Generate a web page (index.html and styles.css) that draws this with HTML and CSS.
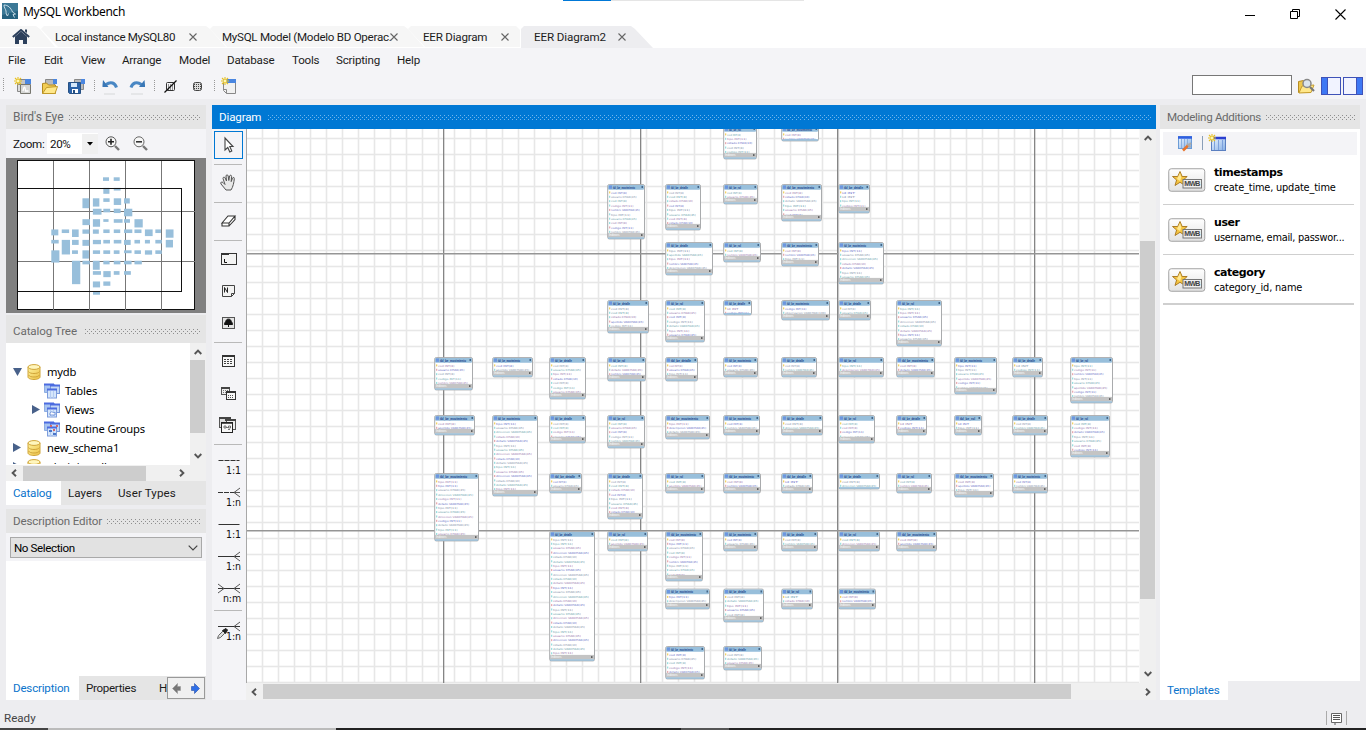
FILE: index.html
```html
<!DOCTYPE html>
<html lang="en">
<head>
<meta charset="utf-8">
<title>MySQL Workbench</title>
<link rel="stylesheet" href="styles.css">
</head>
<body>
<svg class="defs" width="0" height="0">
  <defs>
    <linearGradient id="gold" x1="0" y1="0" x2="1" y2="1"><stop offset="0" stop-color="#fff3a0"/><stop offset="1" stop-color="#ecc044"/></linearGradient>
    <linearGradient id="blueg" x1="0" y1="0" x2="1" y2="1"><stop offset="0" stop-color="#eef6ff"/><stop offset="1" stop-color="#86b0e6"/></linearGradient>
    <linearGradient id="greyg" x1="0" y1="0" x2="0" y2="1"><stop offset="0" stop-color="#ffffff"/><stop offset="1" stop-color="#e2e2e2"/></linearGradient>
    <symbol id="spark" viewBox="0 0 8 8"><path d="M4 0v8M0 4h8M1 1l6 6M7 1l-6 6" stroke="#e8c020" stroke-width="1.1"/><rect x="2.7" y="2.7" width="2.6" height="2.6" fill="#fff8b0"/></symbol>
    <symbol id="db" viewBox="0 0 14 16"><path d="M1 3v10c0 1.400 2.700 2.500 6 2.500s6-1.100 6-2.500V3z" fill="url(#gold)" stroke="#d0a53a"/><ellipse cx="7" cy="3" rx="6" ry="2.400" fill="#fff6bd" stroke="#d0a53a"/><path d="M1.500 7.500c1 1.500 3 2 5.500 2s4.500-.5 5.500-2M1.500 11c1 1.500 3 2 5.500 2s4.500-.5 5.500-2" fill="none" stroke="#d0a53a"/></symbol>
    <symbol id="tables" viewBox="0 0 17 16"><path d="M.5 1.500h10v8H.5z" fill="#a8c4f0" stroke="#8eaee2"/><path d="M0 1.500h10" stroke="#4b6be0" stroke-width="2"/><rect x="6.500" y="2.500" width="9" height="8" fill="#c4d8f6" stroke="#7898da"/><path d="M6 2.500h10" stroke="#4b6be0" stroke-width="2"/><rect x="3.500" y="6.500" width="9" height="8.500" fill="#d5e6fb" stroke="#7c9cdc"/><path d="M3 6.500h10" stroke="#4b6be0" stroke-width="2"/><path d="M6.500 8v7M9.500 8v7" stroke="#b4ccf2"/></symbol>
    <symbol id="mwb" viewBox="0 0 38 25"><rect x=".75" y=".75" width="36" height="22.500" rx="2.500" fill="url(#greyg)" stroke="#a2a2a2"/><path d="M12 3.500l2.200 5h5l-3.900 3.500 1.900 5.500-5.200-3.200L7 17.500 8.600 12 4.500 8.500h5.200z" fill="#f4c542" stroke="#a5731a" stroke-width=".9"/><path d="M12 5l1.300 4.500L12 13l-3-2z" fill="#ffe996"/><rect x="15" y="11.500" width="18.500" height="8.500" fill="#eee" stroke="#777"/><text x="16.300" y="18.400" class="mwb-text" textLength="16">MWB</text></symbol>
    <symbol id="close" viewBox="0 0 8 8"><path d="M.5.5l7 7M7.500.5l-7 7" stroke="#666" stroke-width="1.100"/></symbol>
    <symbol id="chev" viewBox="0 0 8 6"><path d="M.7 5L4 1.600 7.300 5" fill="none" stroke="#555" stroke-width="1.900"/></symbol>
  </defs>
</svg>
<div class="app">
  <div class="progress"></div>
  <header class="titlebar">
    <svg width="16" height="16" viewBox="0 0 16 16"><rect width="16" height="16" fill="#25617f"/><path d="M0 0h16v8L0 12z" fill="#3b7896"/><path d="M2 2c4 0 7 3 8.500 7l3 2-2.500.5 1.500 3M2 2c0 3 1.500 3.500 2 6 .2 2 0 4 1.500 5l1-2.500" fill="none" stroke="#d4e4ed" stroke-width=".9"/></svg>
    <span class="title">MySQL Workbench</span>
    <div class="window-buttons">
      <svg width="11" height="11"><path d="M0 6.500h10" stroke="#000"/></svg>
      <svg width="11" height="11"><path d="M.5 2.500h7v7h-7zM2.500 2V.5h7v7H8" fill="none" stroke="#000"/></svg>
      <svg width="11" height="11"><path d="M.5.5l10 10M10.500.5l-10 10" stroke="#000" stroke-width="1.100"/></svg>
    </div>
  </header>
  <nav class="tabs">
    <div class="tab home"><svg width="18" height="15" viewBox="0 0 18 15"><path d="M3 7.500L9 2.500l6 5V15h-4v-4H7v4H3z" fill="#2c405c"/><path d="M.8 8L9 1l8.200 7" fill="none" stroke="#2c405c" stroke-width="2"/><path d="M13 0.500h2V4l-2-1.500z" fill="#2c405c"/></svg></div>
    <div class="tab t1"><span>Local instance MySQL80</span><svg width="8" height="8"><use href="#close"/></svg></div>
    <div class="tab t2"><span>MySQL Model (Modelo BD Operac.</span><svg width="8" height="8"><use href="#close"/></svg></div>
    <div class="tab t3"><span>EER Diagram</span><svg width="8" height="8"><use href="#close"/></svg></div>
    <div class="tab active"><span>EER Diagram2</span><svg width="8" height="8"><use href="#close"/></svg></div>
  </nav>
  <nav class="menu">
    <span class="m1">File</span><span class="m2">Edit</span><span class="m3">View</span><span class="m4">Arrange</span><span class="m5">Model</span><span class="m6">Database</span><span class="m7">Tools</span><span class="m8">Scripting</span><span class="m9">Help</span>
  </nav>
  <div class="toolbar">
    <svg width="240" height="27" viewBox="0 72 240 27">
      <g stroke="#999" stroke-dasharray="1 1"><path d="M3.500 78v13M94.500 80v12M154.500 80v12M214.500 80v12"/></g>
      <path d="M17.500 79.500h10v9h-10z" fill="#c4c4c4" stroke="#858585"/><path d="M25 79h6v5h-6z" fill="#4a86e0"/><path d="M17.500 84.500h3v7h-3z" fill="#ddd" stroke="#888"/><path d="M20.500 84.500h10v9h-10z" fill="#d6d6d4" stroke="#77776f"/><path d="M23 91c1-5 2-5 2.500 0h3" fill="none" stroke="#fff" stroke-width="1.300"/><use href="#spark" x="14" y="77" width="8" height="8"/>
      <path d="M45.500 79.500h9v9h-9z" fill="#bbb" stroke="#888"/><path d="M53 79h4v5h-4z" fill="#4a86e0"/><path d="M42.500 93.500v-10l4-.5 2 2h7v8.500z" fill="#f2cd54" stroke="#b38a20"/><path d="M42.500 93.500l4-6 11-1-2.500 7z" fill="#ffe88b" stroke="#c29a2a"/>
      <path d="M74.500 79.500h9v10h-9z" fill="#bbb" stroke="#888"/><path d="M81 79h4v5h-4z" fill="#4a86e0"/><path d="M68.500 82.500h12v11h-11l-1-1z" fill="#2c63a8" stroke="#275184"/><path d="M71 83h6v4h-6z" fill="#d6e9fb"/><path d="M72 89h6v4h-6z" fill="#fff"/><path d="M73 90h2v3h-2z" fill="#275184"/>
      <g fill="none" stroke="#4987c4" stroke-width="3"><path d="M106 84.500c5-3.500 9-1.500 10.500 3"/><path d="M141.500 84.500c-5-3.500-9-1.500-10.500 3"/></g><path d="M102.500 85l.5-5 5.500 7h-6zM145 85l-.5-5-5.500 7h6z" fill="#3977b6"/><path d="M104 94h11M131 94h12" stroke="#e0e1e4" stroke-width="1.500"/>
      <g fill="none" stroke="#333"><rect x="166.500" y="82.500" width="8" height="8" rx="1"/><path d="M168 85h6M168 87h6M168 89h6" stroke-dasharray="1 1"/><path d="M164.500 92.500l12-12" stroke="#111" stroke-width="1.200"/><rect x="193.500" y="82.500" width="8" height="8" rx="2" stroke="#444" fill="#ddd"/><path d="M194 84.500h8M194 86.500h8M194 88.500h8" stroke="#444" stroke-dasharray="1 1"/></g>
      <path d="M223.500 80.500h12v13h-9l-3-3z" fill="#f1f1f1" stroke="#888"/><path d="M223 79h13v4h-13z" fill="#4a86e0"/><path d="M223.500 89.500h3v4" fill="none" stroke="#888"/><use href="#spark" x="221" y="77" width="8" height="8"/>
    </svg>
    <div class="search"></div>
    <svg class="right-icons" width="68" height="22" viewBox="1296 75 68 22"><path d="M1298.500 92.500v-11l5-1 1 2h6v10z" fill="#eec64b" stroke="#b68c21"/><path d="M1299 93l3-7 12-1-3 7.500z" fill="#ffe78a" stroke="#c69d2e"/><circle cx="1307" cy="83.500" r="4" fill="#dce5ec" stroke="#888" stroke-width="1.500"/><path d="M1310 87l4 4" stroke="#777" stroke-width="2.200"/><g fill="#f1f3ff" stroke="#3f52b8"><rect x="1321.500" y="77.500" width="19" height="17"/><rect x="1343.500" y="77.500" width="19" height="17"/></g><path d="M1322 78h5v16h-5zM1357 78h5v16h-5z" fill="#3e78f4"/><path d="M1327.500 78v16M1356.500 78v16" stroke="#3f52b8"/></svg>
  </div>

  <main class="body">
    <aside class="left">
      <div class="head"><span class="h1">Bird's Eye</span><i class="dots"></i></div>
      <div class="zoom-row"><span>Zoom:</span><div class="zoom-value"><b>20%</b><i><svg width="6" height="4"><path d="M0 0h6L3 3.500z"/></svg></i></div>
        <svg class="mag" width="15" height="15" viewBox="0 0 15 15"><circle cx="6" cy="5.800" r="5" fill="#f7f7f7" stroke="#555"/><path d="M3 5.800h6M6 2.800v6" stroke="#222" stroke-width="1.600"/><path d="M10 10l4 4" stroke="#777" stroke-width="2.400"/></svg>
        <svg class="mag" width="15" height="15" viewBox="0 0 15 15"><circle cx="6" cy="5.800" r="5" fill="#f7f7f7" stroke="#666"/><path d="M3 5.800h6" stroke="#333" stroke-width="1.600"/><path d="M10 10l4 4" stroke="#777" stroke-width="2.400"/></svg>
      </div>
      <svg id="minimap" class="minimap" width="200" height="155" viewBox="6 158 200 155"></svg>
      <div class="head catalog"><span class="h2">Catalog Tree</span><i class="dots"></i></div>
      <div class="tree">
        <div class="tree-view">
          <div class="row"><svg width="9" height="8"><path d="M0 0h9L4.500 8z" fill="#48618a"/></svg><svg class="ic" width="14" height="16"><use href="#db"/></svg><span>mydb</span></div>
          <div class="row sub"><i></i><svg class="ic" width="17" height="16"><use href="#tables"/></svg><span>Tables</span></div>
          <div class="row sub"><svg width="8" height="9"><path d="M0 0v9l8-4.500z" fill="#48618a"/></svg><svg class="ic" width="17" height="16"><use href="#tables"/><path d="M6 11c2-3 3 1 5-1v3H6z" fill="#fff" stroke="#557fd0" stroke-width=".8"/></svg><span>Views</span></div>
          <div class="row sub"><i></i><svg class="ic" width="17" height="16"><use href="#tables"/><path d="M5 9h3v2H5zM9 12h3v2H9z" fill="#4a76c9"/><path d="M9 8h2v2H9zM6 4h2v2H6zM12 4h2v2h-2z" fill="#d06a6a"/></svg><span>Routine Groups</span></div>
          <div class="row"><svg width="8" height="9"><path d="M0 0v9l8-4.500z" fill="#48618a"/></svg><svg class="ic" width="14" height="16"><use href="#db"/></svg><span>new_schema1</span></div>
          <div class="row"><svg width="8" height="9"><path d="M0 0v9l8-4.500z" fill="#48618a"/></svg><svg class="ic" width="14" height="16"><use href="#db"/></svg><span>phpinjavadb</span></div>
        </div>
        <div class="vbar"><svg width="8" height="6"><use href="#chev"/></svg><i></i><svg class="down" width="8" height="6"><use href="#chev"/></svg></div>
      </div>
      <div class="hbar-small"><svg class="lt" width="8" height="6"><use href="#chev"/></svg><i></i><svg class="rt" width="8" height="6"><use href="#chev"/></svg></div>
      <div class="side-tabs"><b class="on s1">Catalog</b><b class="s2">Layers</b><b class="s3">User Types</b></div>
      <div class="head desc"><span class="h3">Description Editor</span><i class="dots"></i></div>
      <div class="select-row"><div class="select"><span>No Selection</span><svg width="10" height="6"><path d="M.7.700L5 5 9.300.700" fill="none" stroke="#444" stroke-width="1.200"/></svg></div></div>
      <div class="blank"></div>
      <div class="side-tabs bottom"><b class="on s4">Description</b><b class="s5">Properties</b><b class="s6">H</b><div class="arrows"><svg width="37" height="21"><path d="M4.500 10.500l5-5v3h3v4h-3v3z" fill="#777" stroke="#999" stroke-width=".6"/><path d="M31.500 10.500l-5-5v3h-3v4h3v3z" fill="#2f6fe8" stroke="#274fa6" stroke-width=".6"/></svg></div></div>
    </aside>

    <section class="center">
      <div class="head blue"><span class="h4">Diagram</span><i class="dots"></i></div>
      <div class="workspace">
        <div class="tools">
          <svg class="tool picked" viewBox="0 0 33 32"><path d="M13 9v12l2.800-2.500 2 4.500 2-1-2-4.500h3.200z" fill="#fff" stroke="#444" stroke-width="1.100"/></svg>
          <i class="sep"></i>
          <svg class="tool" viewBox="0 0 33 32"><path d="M14 23l-5-6c-1-2 1-2.500 2-1.500l2 2-2-6c0-2 1.800-1.500 2.200-.5l1.300 3-.5-5c0-1.500 2-1.500 2.200 0l.6 4.500.8-4.500c.4-1.300 2.200-1 2 .6l-.4 5 1.300-3.500c.7-1.300 2-.7 1.800.6-.3 3.500-1.200 8.300-3.300 11.300z" fill="#e8e8e8" stroke="#555"/></svg>
          <i class="sep"></i>
          <svg class="tool" viewBox="0 0 33 32"><path d="M10 18l6-7h7l-6 7zM10 18v3h7v-3M17 21l6-6.500V11" fill="#fff" stroke="#333" stroke-width="1.100"/></svg>
          <i class="sep"></i>
          <svg class="tool" viewBox="0 0 33 32"><rect x="9.500" y="10.500" width="15" height="11" fill="#f3f3f3" stroke="#333"/><path d="M9 11h8" stroke="#333" stroke-width="2"/><path d="M12.500 16v3.500h2.500" fill="none" stroke="#111"/></svg>
          <svg class="tool" viewBox="0 0 33 32"><path d="M10.500 10.500h12v8l-3 3h-9z" fill="#f3f3f3" stroke="#444"/><path d="M19.500 21.500v-3h3" fill="none" stroke="#444"/><path d="M12.500 17.500v-5l3 5v-5" fill="none" stroke="#222"/></svg>
          <svg class="tool" viewBox="0 0 33 32"><rect x="10.500" y="10.500" width="12" height="11" fill="#e4e4e4" stroke="#555"/><path d="M16.500 18v2M12.500 17.500c0-2 1-2.500 1.500-3.500 0-2.500 5-2.500 5 0 .5 1 1.500 1.500 1.500 3.500z" fill="#111" stroke="#111"/></svg>
          <i class="sep"></i>
          <svg class="tool" viewBox="0 0 33 32"><rect x="10.500" y="10.500" width="12" height="11" fill="#f7f7f7" stroke="#333"/><path d="M10 11h13" stroke="#333" stroke-width="2"/><path d="M12 14.500h9M12 16.500h9M12 18.500h9" stroke="#444" stroke-dasharray="2 1"/></svg>
          <svg class="tool" viewBox="0 0 33 32"><rect x="9.500" y="10.500" width="8" height="7" fill="#eee" stroke="#555"/><path d="M9 11h9" stroke="#444" stroke-width="2"/><path d="M11 13.500h5M11 15.500h3" stroke="#777" stroke-dasharray="1 1"/><rect x="14.500" y="14.500" width="9" height="8" fill="#f7f7f7" stroke="#333"/><path d="M14 15h10" stroke="#333" stroke-width="2"/><path d="M16 18.500h6M16 20.500h6" stroke="#555" stroke-dasharray="1 1"/></svg>
          <svg class="tool" viewBox="0 0 33 32"><rect x="7.500" y="8.500" width="11" height="10" fill="#ddd" stroke="#555"/><path d="M7 9h12" stroke="#444" stroke-width="2"/><rect x="14.500" y="10.500" width="9" height="10" fill="#eee" stroke="#555"/><path d="M13 11h11" stroke="#444" stroke-width="2"/><rect x="9.500" y="13.500" width="11" height="10" fill="#f7f7f7" stroke="#222"/><path d="M9 14h12" stroke="#222" stroke-width="1.500"/><path d="M12 17h2v2h-2zM16.500 17h2v2h-2zM16 20.500h2M14 18.500h2" fill="none" stroke="#555" stroke-width=".8"/></svg>
          <i class="sep"></i>
          <svg class="tool" viewBox="0 0 33 32"><path d="M6.500 13.500h21" stroke="#333" stroke-dasharray="5 1"/><text x="29" y="27">1:1</text></svg>
          <svg class="tool" viewBox="0 0 33 32"><path d="M6 13.500h16" stroke="#333" stroke-dasharray="5 1"/><path d="M22 13.500h6M28 9l-6 4.500 6 4.500" fill="none" stroke="#555"/><text x="29" y="27">1:n</text></svg>
          <svg class="tool" viewBox="0 0 33 32"><path d="M6.500 13.500h21" stroke="#333"/><text x="29" y="27">1:1</text></svg>
          <svg class="tool" viewBox="0 0 33 32"><path d="M6 13.500h22" stroke="#333"/><path d="M28 9l-6 4.500 6 4.500" fill="none" stroke="#555"/><text x="29" y="27">1:n</text></svg>
          <svg class="tool" viewBox="0 0 33 32"><path d="M6 13.500h22" stroke="#333"/><path d="M28 9l-6 4.500 6 4.500M6 9l6 4.500L6 18" fill="none" stroke="#555"/><text x="29" y="27">n:m</text></svg>
          <i class="sep"></i>
          <svg class="tool" viewBox="0 0 33 32"><path d="M6 13.500h22" stroke="#333"/><path d="M28 9l-6 4.500 6 4.500" fill="none" stroke="#555"/><path d="M5.500 25.500l1-3 4.500-4.500 2 2-4.500 4.500z" fill="#ddd" stroke="#666"/><path d="M10.500 17.500l3.500-2 1.500 1.500-2 3.500z" fill="#222" stroke="#222"/><text x="29" y="27">1:n</text></svg>
        </div>
        <div class="canvas-wrap">
          <div class="canvas-row">
            <svg id="diagram" class="diagram" width="894" height="554" viewBox="246 129 894 554"></svg>
            <div class="vbar big"><svg width="8" height="6"><use href="#chev"/></svg><i></i><svg class="down" width="8" height="6"><use href="#chev"/></svg></div>
          </div>
          <div class="hbar"><svg class="lt" width="8" height="6"><use href="#chev"/></svg><i></i><svg class="rt" width="8" height="6"><use href="#chev"/></svg></div>
        </div>
      </div>
    </section>

    <aside class="right">
      <div class="head"><span class="h5">Modeling Additions</span><i class="dots"></i></div>
      <div class="right-body">
        <div class="mini-tools"><svg width="80" height="23" viewBox="1163 132 80 23"><rect x="1178.500" y="136.500" width="13" height="12" fill="url(#blueg)" stroke="#6c9cd6"/><path d="M1178 137.500h14" stroke="#2f5fe0" stroke-width="2.500"/><path d="M1181.500 139v9M1184.500 139v9M1187.500 139v9" stroke="#88afe0"/><path d="M1183 150.500l5-5" stroke="#e8742c" stroke-width="2.600"/><path d="M1187 143.500l3.500 3.500M1188 146l3-3" stroke="#aaa" stroke-width="1.800"/><path d="M1202.500 136v14" stroke="#8a9fb8"/><rect x="1211.500" y="137.500" width="14" height="13" fill="url(#blueg)" stroke="#5a7fc0"/><path d="M1211 138h15" stroke="#2b3fd0" stroke-width="2.500"/><path d="M1214.500 140v10M1218.500 140v10M1222.500 140v10" stroke="#7ca0dc"/><use href="#spark" x="1208" y="134" width="8" height="8"/></svg></div>
        <div class="item"><svg width="38" height="25"><use href="#mwb"/></svg><div><b>timestamps</b><span class="i2">create_time, update_time</span></div></div>
        <div class="item"><svg width="38" height="25"><use href="#mwb"/></svg><div><b>user</b><span class="i4">username, email, passwor...</span></div></div>
        <div class="item last"><svg width="38" height="25"><use href="#mwb"/></svg><div><b>category</b><span class="i6">category_id, name</span></div></div>
      </div>
      <div class="right-tab"><b>Templates</b></div>
    </aside>
  </main>
  <footer class="status"><span>Ready</span><svg width="24" height="16"><path d="M.5 1v14M20.500 1v14" stroke="#aaa"/><path d="M5.500 3.500h10v9h-10z" fill="#fff" stroke="#666"/><path d="M7 5.500h7M7 7.500h7M7 9.500h7M9 13v2" stroke="#555"/></svg></footer>
  <div class="edge"><i></i><i></i><i></i><i></i><i></i></div>
</div>
<script src="script.js"></script>
</body>
</html>
```
FILE: styles.css
```css
* { box-sizing: border-box; }
body { margin: 0; font: 11.6px Roboto, "Noto Sans", sans-serif; letter-spacing: -.33px; color: #1c1c1c; overflow: hidden; background: #ededf0; }
svg { display: block; flex: none; }
b { font-weight: normal; }
i { font-style: normal; }
span, b { white-space: nowrap; }
.defs { position: absolute; }
.app { width: 1366px; height: 730px; display: flex; flex-direction: column; position: relative; }
.progress { position: absolute; left: 563px; top: 0; width: 241px; height: 1px; background: linear-gradient(90deg, #0078d7 48px, #e5e5e5 48px); }

.titlebar { height: 26px; background: #fff; display: flex; align-items: flex-start; padding: 3px 20px 0 2px; }
.title { margin: 1px 0 0 5px; font: 12px/16px "Noto Sans", sans-serif; letter-spacing: -.3px; color: #000; }
.window-buttons { margin: 6px 0 0 auto; display: flex; gap: 34px; }

.tabs { height: 22px; background: #fff; display: flex; }
.tab { height: 21px; background: #f6f6f6; display: flex; align-items: center; clip-path: polygon(5px 0, calc(100% - 20px) 0, calc(100% - 16px) 3px, 100% 100%, 19px 100%, 2px 3px); }
.tab span { flex: none; }
.home { width: 55px; padding-left: 12px; clip-path: polygon(0 0, 36px 0, 40px 3px, 100% 100%, 0 100%); }
.t1 { width: 187px; margin-left: -16px; padding-left: 16px; }
.t1 span { width: 134px; }
.t2 { width: 216px; margin-left: -18px; padding-left: 14px; }
.t2 span { width: 168px; letter-spacing: -.28px; }
.t3 { width: 112px; margin-left: -16px; padding-left: 15px; clip-path: polygon(3px 0, 108px 0, 112px 4px, 100% 100%, 17px 100%, 0 3px); }
.t3 span { width: 78px; letter-spacing: -.22px; }
.active { height: 22px; width: 132px; margin-left: 1px; background: #ededf0; padding-left: 13px; clip-path: polygon(0 3px, 3px 0, 110px 0, 114px 3px, 100% 100%, 0 100%); }
.active span { width: 84px; letter-spacing: -.1px; }

.menu { height: 24px; background: #f4f4f7; display: flex; align-items: center; padding-left: 8px; letter-spacing: -.2px; }
.m1 { width: 36px; }
.m2 { width: 37px; }
.m3 { width: 41px; }
.m4 { width: 57px; }
.m5 { width: 48px; }
.m6 { width: 65px; }
.m7 { width: 44px; }
.m8 { width: 61px; }
.toolbar { height: 27px; background: #f4f4f7; display: flex; }
.search { width: 100px; height: 20px; margin: 3px 4px 0 auto; background: #fff; border: 1px solid #777; }
.right-icons { margin: 3px 2px 0 0; }

.body { height: 601px; padding: 6px 6px 0; display: flex; }
.head { height: 24px; background: #e5e5e5; color: #6a6a6a; display: flex; align-items: center; padding: 0 5px 0 7px; gap: 5px; flex: none; }
.h1 { font-size: 12px; letter-spacing: 0; }
.h2 { letter-spacing: -.1px; margin-right: 3px; }
.h3 { letter-spacing: -.15px; }
.h4 { letter-spacing: -.15px; }
.dots { flex: 1; height: 5px; opacity: .6; background: radial-gradient(circle at .5px .5px, #555 .6px, transparent .7px) 0 0 / 4px 4px, radial-gradient(circle at .5px .5px, #555 .6px, transparent .7px) 2px 2px / 4px 4px; }
.left { width: 200px; display: flex; flex-direction: column; }
.zoom-row { height: 29px; background: #f4f4f7; display: flex; align-items: center; padding-left: 7px; color: #111; flex: none; }
.zoom-row > span { width: 30px; }
.zoom-value { width: 51px; height: 21px; margin: 0 7px 0 4px; background: #fff; display: flex; align-items: center; justify-content: space-between; padding-left: 3px; }
.zoom-value i { width: 16px; height: 20px; background: #f0f0f0; display: flex; align-items: center; justify-content: center; }
.mag { margin-right: 13px; }
.catalog { height: 28px; margin-top: 2px; padding-top: 4px; }
.tree { height: 122px; background: #fff; display: flex; justify-content: space-between; flex: none; }
.tree-view { width: 183px; height: 121px; overflow: hidden; padding: 19px 0 0 7px; font: 11.2px "Noto Sans", sans-serif; letter-spacing: -.15px; color: #000; }
.row { height: 19px; display: flex; align-items: center; }
.row > :first-child { width: 9px; margin-right: 5px; }
.row .ic { margin-right: 6px; }
.sub { padding-left: 19px; }
.sub > :first-child { margin-right: 3px; }
.sub .ic { margin-right: 4px; }
.vbar { width: 16px; background: #f0f0f0; display: flex; flex-direction: column; align-items: center; padding: 6px 1px 6px 0; }
.vbar i { width: 15px; height: 73px; margin-top: 5px; background: #cdcdcd; }
.down { transform: rotate(180deg); margin-top: auto; }
.hbar-small, .hbar { height: 16px; background: #f0f0f0; display: flex; align-items: center; padding: 0 20px 0 4px; flex: none; }
.hbar-small i { width: 123px; height: 15px; margin-left: 5px; background: #cdcdcd; }
.lt { transform: rotate(-90deg); }
.rt { transform: rotate(90deg); margin-left: auto; }
.side-tabs { height: 24px; display: flex; background: #e5e5e5; flex: none; }
.side-tabs b { line-height: 24px; padding: 0 7px; }
.side-tabs .on { background: #fff; color: #0a74cc; }
.s1 { width: 55px; letter-spacing: -.2px; }
.s2 { width: 50px; letter-spacing: 0; }
.s3 { letter-spacing: .1px; }
.desc { margin-top: 4px; }
.select-row { height: 28px; padding: 4px 4px 3px; background: #f4f4f7; flex: none; }
.select { height: 21px; border: 1px solid #a9a9a9; background: #e2e2e2; display: flex; align-items: center; justify-content: space-between; padding: 0 3px; color: #000; letter-spacing: -.4px; }
.blank { height: 115px; background: #fff; flex: none; }
.s4 { width: 73px; letter-spacing: -.2px; }
.s5 { width: 73px; }
.bottom .s6 { padding-right: 0; width: 15px; }
.arrows { width: 38px; height: 22px; border: 1px solid #999; background: #f0f0f0; margin-top: 1px; }

.center { width: 944px; margin: 0 4px 0 6px; }
.blue { background: #0078d4; color: #fff; gap: 7px; }
.blue .dots { opacity: .6; background: radial-gradient(circle at .5px .5px, #bfe0ff .6px, transparent .7px) 0 0 / 4px 4px, radial-gradient(circle at .5px .5px, #bfe0ff .6px, transparent .7px) 2px 2px / 4px 4px; }
.workspace { display: flex; height: 571px; }
.tools { width: 34px; background: #f4f4f7; }
.tool { width: 33px; height: 32px; }
.tool text { font: 10.5px "DejaVu Sans Condensed", "DejaVu Sans", sans-serif; letter-spacing: -.1px; text-anchor: end; fill: #111; }
.picked { outline: 1px solid #0078d4; outline-offset: -3px; }
.sep { display: block; height: 6px; border-top: 3px solid #f4f4f7; border-bottom: 2px solid #f4f4f7; background: #b9b9b9; margin: 0 4px 0 2px; }
.canvas-row { display: flex; height: 554px; }
.diagram { background: #fff; letter-spacing: 0; }
.big i { height: 358px; margin-top: 100px; }
.hbar { height: 17px; padding: 0 4px; width: 910px; }
.hbar i { width: 808px; height: 15px; margin-left: 5px; background: #cdcdcd; }

.right { width: 200px; height: 595px; display: flex; flex-direction: column; }
.right-body { flex: 1; background: #fff; padding: 3px 3px 0; }
.mini-tools { height: 23px; background: #f4f4f7; }
.item { height: 50px; width: 191px; border-bottom: 1px solid #cfcfcf; display: flex; padding: 13px 0 0 5px; gap: 8px; color: #000; }
.last { border-bottom-width: 2px; }
.item div { display: flex; flex-direction: column; margin-top: -3px; font: 9.8px/14px "DejaVu Sans", sans-serif; letter-spacing: -.18px; }
.item b { font: bold 11px/16px "DejaVu Sans", sans-serif; letter-spacing: -.45px; }
.item .i4 { letter-spacing: -.26px; }
.right-tab { height: 19px; }
.right-tab b { display: block; width: 68px; height: 19px; line-height: 19px; padding-left: 7px; background: #fff; color: #0a74cc; letter-spacing: -.2px; }
.mwb-text { font: bold 7px "Liberation Sans", sans-serif; letter-spacing: 0; fill: #444; }
.status { height: 28px; display: flex; align-items: center; justify-content: space-between; padding: 8px 16px 0 4px; color: #444; letter-spacing: 0; }
.edge { height: 2px; display: flex; }
.edge i { background: #222; flex: 1; }
.edge i:nth-child(1) { flex: 0 0 48px; background: #444; }
.edge i:nth-child(2) { flex: 0 0 288px; background: #bbb; }
.edge i:nth-child(3) { flex: 0 0 345px; }
.edge i:nth-child(4) { flex: 0 0 48px; background: #555; }

.tb-body { fill: #fff; stroke: #a9abad; }
.tb-head { fill: #98bfdb; }
.tb-foot { fill: #c4c4c4; }
.tb-line { font: 2.700px "DejaVu Sans", sans-serif; opacity: .85; }
.tb-title { font: bold 3.200px "Liberation Sans", sans-serif; fill: #143c88; }
.tb-index { font: 3px "Liberation Sans", sans-serif; fill: #fff; }
```
FILE: script.js
```js
// Diagram tables: [x, y, width, bottom, has no index footer]
const tables = [
  [723,126,34,159],[781,126,38,141,1],
  [607,184,38,239],[665,184,36,230],[723,184,35,204],[781,184,41,221],[838,184,32,213],
  [665,242,48,275],[723,242,38,262],[781,242,38,266],[838,242,46,284],
  [607,300,42,333],[665,300,40,342],[723,300,29,315,1],[781,300,49,320],[838,300,33,320],[896,300,46,346],
  [434,357,39,390],[492,357,41,377],[549,357,37,399],[607,357,39,381],[665,357,33,381],[723,357,35,377],[781,357,36,377],[838,357,46,377],[896,357,39,377],[954,357,43,394],[1012,357,31,377],[1070,357,43,403],
  [434,415,41,435],[492,415,46,496],[549,415,37,443],[607,415,38,448],[665,415,45,439],[723,415,37,435],[781,415,42,435],[838,415,37,443],[896,415,31,435],[954,415,28,435],[1012,415,36,435],[1070,415,40,457],
  [434,473,45,541],[549,473,33,493],[607,473,36,519],[665,473,40,493],[723,473,38,493],[781,473,32,493],[838,473,42,489,1],[896,473,36,493],[954,473,40,497],[1012,473,36,493],
  [549,531,46,661],[607,531,41,551],[665,531,38,581],[723,531,35,551],[781,531,37,551],[838,531,42,551],[896,531,41,551],
  [665,588.5,45,609],[723,588.5,41,622],[781,588.5,32,609],[838,588.5,38,609],
  [665,646,40,679],[723,646,39,670]
];
// Column labels ordered by length, so that each line takes the one that fits its width
const names = ['id INT', 'cod INT(8)', 'tipo INT(11)', 'codigo INT(11)', 'estado CHAR(10)', 'usuario CHAR(45)', 'nombre VARCHAR(45)', 'detalle VARCHAR(45)', 'apellido VARCHAR(45)', 'direccion VARCHAR(45)', 'descripcion VARCHAR(45)', 'observacion VARCHAR(100)'];
const nameFor = len => names.reduce((a, b) => Math.abs(b.length * 1.65 - len) < Math.abs(a.length * 1.65 - len) ? b : a);
const keyColors = ['#9adfe0', '#9adfe0', '#e8aab0', '#9adfe0'];
const lineColors = ['#4d8f9c', '#8560a0', '#4650ba', '#6b7c98'];

let out = '';
for (let x = 262; x < 1139; x += 16) out += `<rect x="${x - .3}" y="129" width="1.600" height="554" fill="#e7e7e7"/>`;
for (let y = 138; y < 683; y += 16) out += `<rect x="247" y="${y - .3}" width="892" height="1.600" fill="#e7e7e7"/>`;
for (const x of [443, 640, 837, 1034]) out += `<rect x="${x}" y="129" width="1.300" height="554" fill="#858585"/>`;
for (const y of [253, 530]) out += `<rect x="247" y="${y}" width="892" height="1.500" fill="#959595"/>`;
out += '<rect x="246" y="129" width="1" height="554" fill="#a8a8a8"/><rect x="1139" y="129" width="1" height="554" fill="#f8f8f8"/>';

tables.forEach(([x, y, w, bottom, plain], n) => {
  const b = bottom + .4, h = b - y, foot = plain ? 2 : 6.5;
  const rows = Math.round((h - 6 - foot) / 4.4);
  out += `<rect class="tb-body" x="${x + .7}" y="${y + .6}" width="${w - 1.2}" height="${h - 1.1}" rx="1.500"/>`;
  out += `<rect class="tb-head" x="${x + 1}" y="${y + 1}" width="${w - 2}" height="4.700" rx="1"/><rect x="${x + 2}" y="${y + 1.5}" width="3" height="3.300" fill="#6d96df"/>`;
  const titleLength = Math.min(w - 13, 12 + (n * 7 % 4) * 5);
  const title = 'tbl_be_' + (titleLength < 16 ? 'rol' : titleLength < 22 ? 'detalle' : 'movimiento');
  out += `<text class="tb-title" x="${x + 6}" y="${y + 4.5}" textLength="${titleLength}" lengthAdjust="spacingAndGlyphs">${title}</text><rect x="${x + w - 3.5}" y="${y + 2}" width="1.500" height="2" fill="#446688"/>`;
  for (let r = 0; r < rows; r++) {
    const ly = y + 9.6 + r * 4.38;
    const len = (w - 6) * (r === 0 ? .5 : r === 1 && rows < 4 ? .95 : .5 + ((r * 7 + n * 3) % 5) * .1);
    out += `<rect x="${x + 2}" y="${ly - 2.2}" width="1.300" height="2" fill="${r === 0 ? '#f0d264' : keyColors[(r + n) % 4]}"/>`;
    out += `<text class="tb-line" x="${x + 4}" y="${ly}" textLength="${len}" lengthAdjust="spacingAndGlyphs" fill="${lineColors[(r + n) % 4]}">${nameFor(len)}</text>`;
  }
  out += `<rect x="${x + 1}" y="${b - 2.2}" width="${w - 2}" height="1.500" fill="#92bbd9"/>`;
  if (!plain) out += `<rect class="tb-foot" x="${x + 1}" y="${b - 6.5}" width="${w - 2}" height="4.300"/><text class="tb-index" x="${x + 2}" y="${b - 3.2}">Indexes</text><rect x="${x + w - 4}" y="${b - 5.2}" width="1.500" height="1.700" fill="#555"/>`;
});
document.getElementById('diagram').innerHTML = out;

let map = '<rect x="6" y="158" width="200" height="155" fill="#808080"/><rect x="17.500" y="160.500" width="177" height="149" fill="#fff" stroke="#111"/>';
for (const x of [53, 89, 125, 161]) map += `<rect x="${x}" y="161" width="1" height="149" fill="#777"/>`;
for (const y of [211, 261]) map += `<rect x="17" y="${y}" width="178" height="1" fill="#777"/>`;
const mini = tables.map(([x, y, w, b]) => [51.3 + (x - 434) * .18, 198.3 + (y - 184) * .18, w * .18, (b - y) * .18]);
mini.push([103, 177.3, 6, 3.6], [113.7, 177.3, 6, 3.6], [93, 291.7, 7, 3]);
for (const [x, y, w, h] of mini) map += `<rect x="${x}" y="${y}" width="${w}" height="${h}" fill="#98bfdb"/>`;
map += '<rect x="17.500" y="188.500" width="164" height="103" fill="none" stroke="#111"/>';
document.getElementById('minimap').innerHTML = map;
```
